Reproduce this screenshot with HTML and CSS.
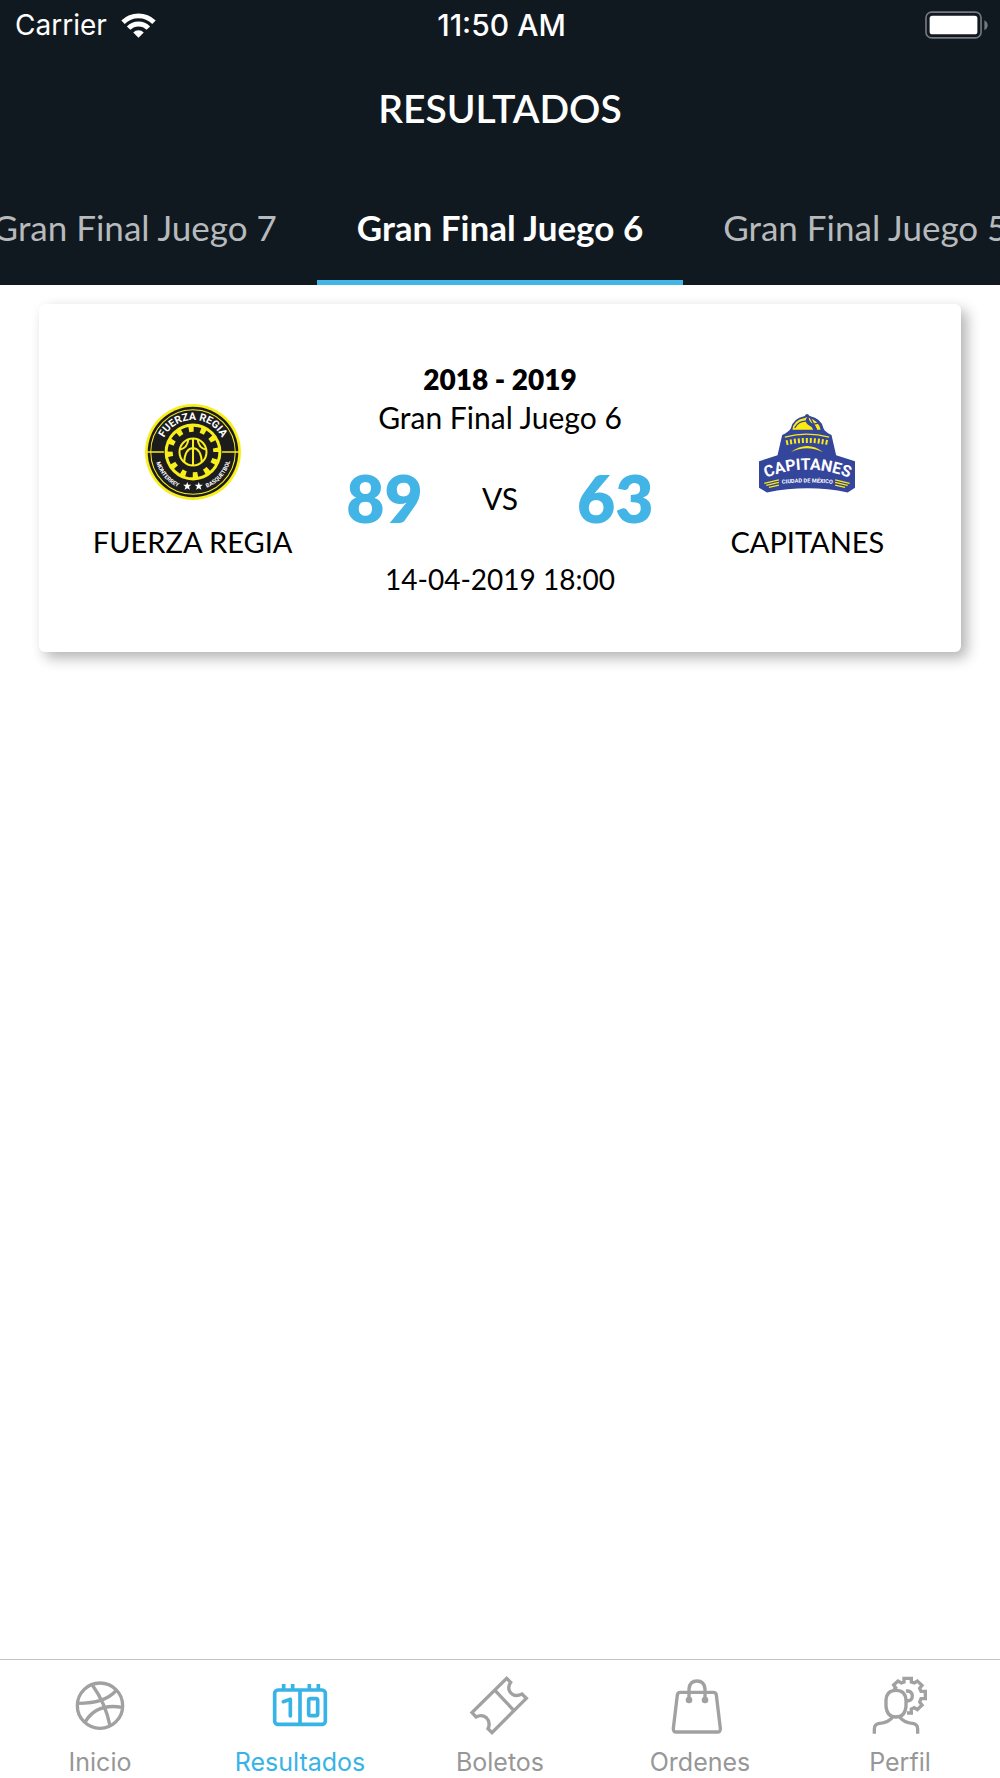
FILE: index.html
```html
<!DOCTYPE html>
<html lang="es">
<head>
  <meta charset="UTF-8" />
  <meta name="viewport" content="width=device-width, initial-scale=1.0"/>
  <title>Resultados</title>
  <link rel="stylesheet" href="styles.css">
</head>
<body>
  <header class="header">
    <div class="status-bar">
      <div class="carrier">
        <span>Carrier</span>
        <svg class="wifi" viewBox="361 35 104 76" fill="none" stroke="#fff">
          <path d="M366 63a67 67 0 0 1 94 0" stroke-width="15"/>
          <path d="M383 81a42 42 0 0 1 60 0" stroke-width="15"/>
          <path d="M413 110l-16-16a23 23 0 0 1 32 0z" fill="#fff" stroke="none"/>
        </svg>
      </div>
      <div class="clock">11:50 AM</div>
      <svg class="battery" viewBox="1275 30 190 84">
        <rect x="1278" y="33" width="166" height="78" rx="17" fill="none" stroke="#75797d" stroke-width="5"/>
        <rect x="1289" y="44" width="144" height="56" rx="8" fill="#fff"/>
        <path d="M1454 58q10 5 10 15t-10 15z" fill="#75797d"/>
      </svg>
    </div>
    <h1>RESULTADOS</h1>
    <div class="tabs" role="tablist">
      <button class="tab" role="tab">Gran Final Juego 7</button>
      <button class="tab active" role="tab" aria-selected="true">Gran Final Juego 6</button>
      <button class="tab" role="tab">Gran Final Juego 5</button>
    </div>
  </header>

  <main>
    <article class="card">
      <div class="team">
        <svg class="logo" viewBox="0 0 284 284">
          <circle cx="142" cy="142" r="142" fill="#f7ee1b"/>
          <circle cx="142" cy="142" r="134" fill="#1c1c1c"/>
          <circle cx="142" cy="142" r="125" fill="none" stroke="#f7ee1b" stroke-width="3"/>
          <path d="M4 142h52M228 142h52" stroke="#f7ee1b" stroke-width="4"/>
          <circle cx="142" cy="142" r="84" fill="#f7ee1b"/>
          <circle cx="142" cy="142" r="60" fill="#1c1c1c"/>
          <circle cx="142" cy="142" r="66" fill="none" stroke="#1c1c1c" stroke-width="18" stroke-dasharray="20 14.56"/>
          <g fill="none" stroke="#f7ee1b" stroke-width="6">
            <circle cx="142" cy="142" r="40"/>
            <path d="M142 102v80M128 105q-2 24-24 30M156 105q2 24 24 30M116 172q2-40 26-42 24 2 26 42"/>
          </g>
          <path id="topArc" d="M47 142a95 95 0 0 1 190 0" fill="none"/>
          <path id="bottomArc" d="M29 142a113 113 0 0 0 226 0" fill="none"/>
          <text class="crest-name"><textPath href="#topArc" startOffset="50%">FUERZA REGIA</textPath></text>
          <text class="crest-small"><textPath href="#bottomArc" startOffset="23%">MONTERREY</textPath></text>
          <text class="crest-small"><textPath href="#bottomArc" startOffset="77%">BASQUETBOL</textPath></text>
          <path d="M125 231l3 8h9l-7 6 3 9-8-5-8 5 3-9-7-6h9zM159 231l3 8h9l-7 6 3 9-8-5-8 5 3-9-7-6h9z" fill="#fff"/>
        </svg>
        <h2>FUERZA REGIA</h2>
      </div>

      <div class="match">
        <div class="season">2018 - 2019</div>
        <div class="phase">Gran Final Juego 6</div>
        <div class="score">
          <strong>89</strong>
          <span>VS</span>
          <strong>63</strong>
        </div>
        <time datetime="2019-04-14T18:00">14-04-2019 18:00</time>
      </div>

      <div class="team">
        <svg class="logo" viewBox="42 12 290 284">
          <path d="M42 182l56-18 14-61q20-10 26-20 6-31 42-38 7-12 15 0 36 7 42 38 4 10 24 20l14 61 57 18v80l-22 14q-120-25-244 0l-24-14z" fill="#34459c"/>
          <path d="M143 87q2-29 37-36l8-3q-11 12 2 24 12 5 16 15z" fill="#fcea10"/>
          <path d="M192 50q30 9 36 37h-11q-4-16-18-22-7-5-7-15z" fill="#fcea10"/>
          <path d="M150 81q15-25 42-19M196 48l20 39M198 72l26-6" fill="none" stroke="#34459c" stroke-width="4"/>
          <path d="M120 109q66-18 134 0" fill="none" stroke="#fcea10" stroke-width="4"/>
          <path d="M124 126q62-14 128 0" fill="none" stroke="#fcea10" stroke-width="15" stroke-dasharray="6 6"/>
          <path d="M138 155q50-38 98 0-50-24-98 0z" fill="#fcea10"/>
          <path id="capArc" d="M58 234q129-54 262 0" fill="none"/>
          <text class="cap-name"><textPath href="#capArc" startOffset="50%">CAPITANES</textPath></text>
          <path id="cityArc" d="M104 251q84-10 168 0" fill="none"/>
          <text class="cap-city"><textPath href="#cityArc" startOffset="50%">CIUDAD DE MÉXICO</textPath></text>
          <path d="M58 249l44-11M64 255l38-9M72 261l30-7M316 249l-44-11M310 255l-38-9M302 261l-30-7" stroke="#fcea10" stroke-width="4"/>
        </svg>
        <h2>CAPITANES</h2>
      </div>
    </article>
  </main>

  <nav class="tab-bar">
    <a href="#inicio">
      <svg viewBox="207 74 186 186" fill="none" stroke="#a1a1a1" stroke-width="10">
        <circle cx="300" cy="166" r="68"/>
        <path d="M277 104q40 56 53 122M235 159q80 0 113-38M256 214q34-56 110-43"/>
      </svg>
      <span>Inicio</span>
    </a>
    <a href="#resultados" class="active">
      <svg viewBox="807 74 186 186" fill="none" stroke="#38b3e5" stroke-width="11">
        <rect x="824" y="119" width="152" height="103" rx="10"/>
        <path d="M900 119v103M851 101v16M878 101v16M928 101v16M955 101v16"/>
        <path d="M850 154l21-7v50" stroke-linecap="round" stroke-linejoin="round"/>
        <rect x="926" y="145" width="27" height="51" rx="5"/>
      </svg>
      <span>Resultados</span>
    </a>
    <a href="#boletos">
      <svg viewBox="207 74 186 186" fill="none" stroke="#a1a1a1" stroke-width="10">
        <path d="M320 84l12 12q-10 14-3 27 13 20 37 8l13 13-103 103-12-12q9-19-5-33-14-11-31-2l-12-13zM285 120l56 60"/>
      </svg>
      <span>Boletos</span>
    </a>
    <a href="#ordenes">
      <svg viewBox="807 74 186 186" fill="none" stroke="#a1a1a1" stroke-width="10">
        <path d="M841 126h99q8 0 9 8l12 100q1 11-9 11H829q-10 0-9-11l12-100q1-8 9-8z"/>
        <path d="M867 148v-32q2-24 24-24t24 24v32"/>
        <circle cx="867" cy="149" r="10" fill="#a1a1a1" stroke="none"/>
        <circle cx="915" cy="149" r="10" fill="#a1a1a1" stroke="none"/>
      </svg>
      <span>Ordenes</span>
    </a>
    <a href="#perfil">
      <svg viewBox="357 74 186 186" fill="none" stroke="#a1a1a1" stroke-width="10">
        <path d="M431 117l6-5-6-8 13-12 10 6 8-3V84h22v11l9 3 9-6 14 13-7 9 4 9h13v22h-13l-4 10 7 9-14 14-9-6-9 4v12h-13"/>
        <path d="M468 122q19-1 19 15t-19 15"/>
        <path d="M408 149q2-29 30-29t30 29v19q-3 32-30 32t-30-32z"/>
        <path d="M373 250v-14q0-13 12-16 35-5 43-21M503 250v-14q0-13-12-16-34-5-42-21"/>
      </svg>
      <span>Perfil</span>
    </a>
  </nav>
</body>
</html>
```

FILE: styles.css
```css
* {
  box-sizing: border-box;
}

body {
  margin: 0;
  min-height: 100vh;
  display: flex;
  flex-direction: column;
  background: #fff;
  color: #000;
  font-family: Lato, "Liberation Sans", sans-serif;
  font-size: 28px;
}

.header {
  background: #111920;
  color: #fff;
}

.status-bar {
  display: grid;
  grid-template-columns: 1fr auto 1fr;
  align-items: center;
  height: 50px;
  padding: 0 12px 0 15px;
  font-family: Inter, sans-serif;
  font-size: 28px;
}

.carrier {
  display: flex;
  align-items: center;
  gap: 14px;
}

.wifi {
  width: 35px;
  height: 25px;
}

.clock {
  font-size: 30px;
  font-weight: 500;
}

.battery {
  width: 63px;
  height: 28px;
  justify-self: end;
}

h1 {
  margin: 0;
  padding: 35px 0;
  font-size: 39px;
  font-weight: 600;
  line-height: 46px;
  text-align: center;
}

.tabs {
  display: flex;
  justify-content: center;
  overflow: hidden;
}

.tab {
  flex: none;
  height: 119px;
  padding: 7px 40px 0;
  border: 0;
  border-bottom: 5px solid transparent;
  background: none;
  color: #b7babc;
  font-family: inherit;
  font-size: 35px;
  cursor: pointer;
}

.tab.active {
  border-color: #43b4e6;
  color: #fff;
  font-weight: bold;
}

main {
  flex: 1;
  padding: 19px 39px;
}

.card {
  display: grid;
  grid-template-columns: 1fr 1fr 1fr;
  align-items: center;
  padding: 56px 0 54px;
  border-radius: 6px;
  background: #fff;
  box-shadow: 6px 6px 14px rgba(0, 0, 0, 0.3);
}

.team {
  display: flex;
  flex-direction: column;
  align-items: center;
  gap: 24px;
  padding-top: 6px;
}

.logo {
  width: 96px;
  height: 96px;
}

h2 {
  margin: 0;
  font-size: 29px;
  font-weight: normal;
  line-height: 36px;
}

.crest-name {
  fill: #fff;
  font-family: Roboto, sans-serif;
  font-size: 31px;
  font-weight: bold;
  text-anchor: middle;
}

.crest-small {
  fill: #fff;
  font-family: Roboto, sans-serif;
  font-size: 17px;
  font-weight: bold;
  text-anchor: middle;
}

.cap-name {
  fill: #fff;
  font-family: Roboto, sans-serif;
  font-size: 48px;
  font-weight: bold;
  text-anchor: middle;
}

.cap-city {
  fill: #fff;
  font-family: Roboto, sans-serif;
  font-size: 17px;
  font-weight: bold;
  text-anchor: middle;
}

.match {
  text-align: center;
  line-height: 38px;
}

.season {
  font-weight: 800;
}

.phase {
  font-size: 30px;
}

.score {
  display: flex;
  justify-content: space-between;
  align-items: center;
  padding: 24px 0;
  font-size: 30px;
  line-height: 76px;
}

.score strong {
  color: #43b4e6;
  font-size: 66px;
  font-weight: 800;
}

.tab-bar {
  display: grid;
  grid-template-columns: repeat(5, 1fr);
  border-top: 1px solid #c4c4c4;
}

.tab-bar a {
  display: flex;
  flex-direction: column;
  align-items: center;
  gap: 10px;
  padding: 15px 0 1px;
  color: #979797;
  font-family: Inter, sans-serif;
  font-size: 25px;
  line-height: 30px;
  text-decoration: none;
}

.tab-bar a.active {
  color: #38b3e5;
}

.tab-bar svg {
  width: 62px;
  height: 62px;
}
```
